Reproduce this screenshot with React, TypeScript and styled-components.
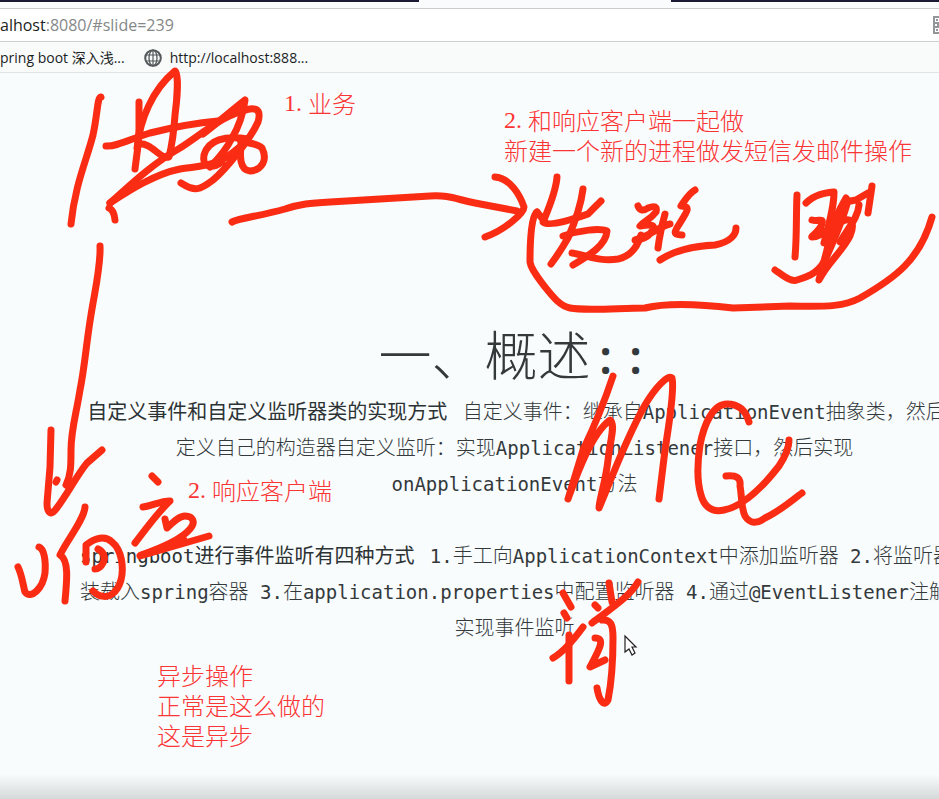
import React from "react";
import styled, { createGlobalStyle } from "styled-components";

const cjk = '"Noto Sans CJK SC", sans-serif';
const mono = '"DejaVu Sans Mono", "Noto Sans CJK SC", monospace';
const ui = '"Open Sans", "Noto Sans CJK SC", sans-serif';

const GlobalStyle = createGlobalStyle`
  *, *::before, *::after { box-sizing: border-box; }
  body { margin: 0; background: #f8fcfd; }
`;

const Page = styled.div`
  position: relative;
  display: flex;
  flex-direction: column;
  min-height: 100vh;
  overflow: hidden;
  font-family: ${ui};
`;

const TabStrip = styled.div`
  display: flex;
  height: 8px;
  background: #f9fbfc;
`;

const TabEdge = styled.div<{ $grow: number; $dark?: boolean }>`
  flex: ${(p) => p.$grow} 1 0;
  height: 2px;
  background: ${(p) => (p.$dark ? "#1a1b33" : "transparent")};
`;

const AddressBar = styled.div`
  display: flex;
  align-items: center;
  height: 34px;
  background: #fff;
  border-top: 1px solid #c9cccd;
  border-bottom: 1px solid #cdd0d0;
  font-size: 16px;
  color: #1c1f20;
`;

const AddressInput = styled.input`
  flex: 1;
  min-width: 0;
  padding: 0;
  border: 0;
  outline: 0;
  background: transparent;
  font: inherit;
  color: #858888;
`;

const IconButton = styled.button`
  display: flex;
  flex: none;
  width: 6px;
  padding: 0;
  border: 0;
  overflow: hidden;
  background: none;

  svg { flex: none; }
`;

const Bookmarks = styled.nav`
  display: flex;
  align-items: center;
  gap: 19px;
  height: 31px;
  padding-top: 2px;
  background: #f9fbfb;
  border-bottom: 1px solid #e1e4e4;
`;

const Bookmark = styled.a`
  display: flex;
  align-items: center;
  gap: 8px;
  font-size: 14px;
  line-height: 20px;
  color: #1b1e1f;
  text-decoration: none;
  white-space: nowrap;
`;

const Slide = styled.main`
  flex: 1;
  display: flex;
  flex-direction: column;
  align-items: center;
  gap: 36px;
  padding: 248px 0 110px 90px;
  font-family: ${cjk};
  color: #34393b;
`;

const Overview = styled.section`
  display: flex;
  flex-direction: column;
  align-items: center;
  gap: 8px;
`;

const Heading = styled.h1`
  display: flex;
  height: 64px;
  margin: 0;
  font-size: 53px;
  font-weight: 300;
  line-height: 64px;
  white-space: nowrap;
`;

const Colon = styled.span`
  width: 30px;
  font-family: "Noto Sans", sans-serif;
  font-size: 46px;
  font-weight: 600;
  line-height: 70px;
  text-align: center;
`;

const Paragraph = styled.p`
  display: flex;
  flex-direction: column;
  align-items: center;
  margin: 0;
  font-size: 20px;
  font-weight: 300;
  line-height: 36px;
`;

const Line = styled.span`
  display: block;
  height: 36px;
  white-space: pre;

  strong { padding: 0 4px; color: #2d3234; }
`;

const Code = styled.span`
  font-family: ${mono};
  font-size: 19px;
  line-height: 20px;
`;

const Note = styled.div<{ $x: number; $y: number }>`
  position: absolute;
  left: ${(p) => p.$x}px;
  top: ${(p) => p.$y}px;
  font-family: ${cjk};
  font-size: 24px;
  font-weight: 300;
  line-height: 30px;
  color: #fb3434;
`;

const NoteLine = styled.div`
  display: flex;
  height: 30px;
  white-space: nowrap;
`;

const NoteNumber = styled.span`
  width: 24px;
  font-family: "Liberation Serif", serif;
`;

const Ink = styled.svg`
  position: absolute;
  top: 0;
  left: 0;
  pointer-events: none;
`;

const BottomShade = styled.div`
  position: absolute;
  right: 0;
  bottom: 0;
  left: 0;
  height: 25px;
  background: linear-gradient(#f8fcfd, #d6d9da);
`;

const strokes = [
  "M101 97C97 98 98 112 93 135C86 162 75 185 71 224",
  "M139 102L139 130Q138 150 135 169",
  "M137 148C140 120 152 90 175 71C179 73 177 100 175 115C174 130 172 145 169 157C160 160 152 142 138 144",
  "M106 146C116 147 130 139 150 133C170 128 195 123 218 121",
  "M203 134C215 125 232 110 245 100C243 115 238 128 232 138C225 152 215 162 210 167",
  "M110 203C125 190 150 165 180 148C200 135 220 118 240 112C255 106 262 108 258 122C250 140 225 170 213 180C200 190 195 192 181 183",
  "M110 203C130 190 155 174 180 169C205 165 220 168 248 139C225 135 208 140 204 155C202 166 210 170 222 162",
  "M241 143C240 155 239 170 250 171C262 170 268 160 262 148C257 143 248 144 240 140",
  "M109 208Q114 210 115 220",
  "M232 222C240 218 260 216 285 209C300 204 310 203 330 202L430 196C450 195 455 199 475 203L517 211",
  "M495 177C510 178 520 195 524 207C524 213 505 230 485 237",
  "M537 212C532 214 530 235 530 262C531 270 540 280 545 287C553 297 560 306 570 308C585 311 620 308 645 308C665 303 700 304 733 308L790 306C830 307 845 306 860 298C895 278 920 260 932 217",
  "M557 177C556 192 548 210 543 222C550 228 585 215 588 214C592 210 598 204 601 201M537 212L545 222",
  "M583 189C581 205 575 222 568 238Q560 252 551 264",
  "M563 236C580 230 600 228 607 231C606 245 590 255 573 265",
  "M572 253C585 255 600 262 618 259C632 256 638 245 641 235",
  "M638 206Q641 213 648 208Q658 204 656 212C650 220 643 222 640 226C652 224 656 225 652 231C648 238 640 240 635 240C650 236 660 226 670 224",
  "M665 214Q660 232 658 248",
  "M695 190C688 194 684 202 681 206C690 206 688 210 683 218C676 230 670 235 682 235",
  "M660 260C675 250 695 246 715 245C730 242 736 235 736 228",
  "M797 195C796 215 797 235 795 257",
  "M806 203C815 194 825 193 834 192C834 207 829 225 824 243",
  "M775 270C785 277 791 282 797 280C811 276 820 271 826 258C834 240 842 222 847 204",
  "M812 220C818 222 824 217 822 224C819 232 810 237 812 237C822 237 828 228 838 222",
  "M833 222L827 250L819 280C828 262 842 252 850 236C855 224 852 217 843 221",
  "M846 198C838 212 832 225 826 240M845 202L856 200L868 193M859 205C858 218 848 228 840 242",
  "M872 186L868 213",
  "M100 246C101 265 95 290 91 315C86 345 85 365 80 390C76 415 71 430 71 450C71 465 71 475 66 485",
  "M51 430L50 467L47 503C47 513 51 516 56 509C67 495 77 475 87 463L102 450",
  "M57 480L56 482",
  "M18 567C22 575 23 585 25 592C31 600 43 588 45 573C46 560 44 549 39 547",
  "M85 507C84 520 67 540 60 555C69 560 67 580 65 601",
  "M86 562L86 545C95 538 105 535 112 542C122 550 124 568 121 580C117 594 108 598 102 596C98 596 95 593 93 591",
  "M98 549C104 552 106 558 103 563Q100 569 95 569",
  "M152 476L158 482",
  "M143 507C152 506 160 501 170 501C158 512 145 530 135 543",
  "M165 519L167 528C175 520 180 516 185 516C193 516 196 522 190 529C180 541 155 550 140 556L209 536",
  "M141 555L184 540",
  "M613 376C605 400 595 425 583 450L568 499C575 480 590 435 610 420C616 425 610 440 608 460C606 480 598 505 599 508C605 495 625 440 645 405C655 388 668 374 672 378C675 390 668 430 665 450L659 499",
  "M749 422C745 408 736 404 727 404C713 404 704 424 700 445C697 465 697 482 701 495C704 506 711 513 724 510C745 506 765 484 779 466C787 454 789 446 789 440",
  "M726 476C737 475 741 478 740 486C742 496 741 508 745 516C750 524 757 524 765 518C780 511 791 501 802 493",
  "M563 593L571 607",
  "M564 613L567 618",
  "M583 627C575 638 565 651 553 658",
  "M569 635L569 681",
  "M609 583L612 602",
  "M595 605L598 608",
  "M638 582C630 596 613 607 592 623",
  "M602 620C611 619 613 625 613 638C613 660 612 680 608 700C604 708 599 700 597 688",
  "M595 638C606 638 599 650 590 667L605 660",
];

const GlobeIcon = () => (
  <svg width="18" height="18" viewBox="0 0 18 18" fill="none" stroke="#54585a" aria-hidden="true">
    <circle cx="9" cy="9" r="7.8" strokeWidth="2" />
    <ellipse cx="9" cy="9" rx="4" ry="7.8" strokeWidth="1.3" />
    <path d="M9 1V17M2 6H16M2 12H16" strokeWidth="1.2" />
  </svg>
);

const QrIcon = () => (
  <svg width="18" height="18" viewBox="0 0 18 18" fill="none" stroke="#92969a" strokeWidth="2" aria-hidden="true">
    <path d="M1 1H7V7H1ZM1 11H7V17H1ZM11 1H17V7H11ZM11 11H17V17H11Z" />
    <path d="M3 4H5M3 14H5M0 9H2M4 9H8" />
  </svg>
);

export default function App() {
  return (
    <>
      <GlobalStyle />
      <Page>
        <TabStrip>
          <TabEdge $grow={419} $dark />
          <TabEdge $grow={252} />
          <TabEdge $grow={268} $dark />
        </TabStrip>
        <AddressBar>
          <span>alhost</span>
          <AddressInput aria-label="Address" defaultValue=":8080/#slide=239" />
          <IconButton aria-label="QR code">
            <QrIcon />
          </IconButton>
        </AddressBar>
        <Bookmarks>
          <Bookmark href="#spring">pring boot 深入浅...</Bookmark>
          <Bookmark href="#localhost">
            <GlobeIcon />
            http://localhost:888...
          </Bookmark>
        </Bookmarks>

        <Slide>
          <Overview>
            <Heading>
              一、概述
              <Colon>:</Colon>
              <Colon>:</Colon>
            </Heading>
            <Paragraph>
              <Line>
                <strong>自定义事件和自定义监听器类的实现方式</strong>
                <Code> </Code>自定义事件：继承自<Code>ApplicationEvent</Code>抽象类，然后
              </Line>
              <Line>
                定义自己的构造器自定义监听：实现<Code>ApplicationListener</Code>接口，然后实现
              </Line>
              <Line>
                <Code>onApplicationEvent</Code>方法
              </Line>
            </Paragraph>
          </Overview>
          <Paragraph>
            <Line>
              <strong>
                <Code>springboot</Code>进行事件监听有四种方式
              </strong>
              <Code> 1.</Code>手工向<Code>ApplicationContext</Code>中添加监听器<Code> 2.</Code>将监听器
            </Line>
            <Line>
              装载入<Code>spring</Code>容器<Code> 3.</Code>在<Code>application.properties</Code>
              中配置监听器<Code> 4.</Code>通过<Code>@EventListener</Code>注解
            </Line>
            <Line>实现事件监听</Line>
          </Paragraph>
        </Slide>

        <BottomShade />

        <Note $x={284} $y={88}>
          <NoteLine><NoteNumber>1.</NoteNumber>业务</NoteLine>
        </Note>
        <Note $x={504} $y={105}>
          <NoteLine><NoteNumber>2.</NoteNumber>和响应客户端一起做</NoteLine>
          <NoteLine>新建一个新的进程做发短信发邮件操作</NoteLine>
        </Note>
        <Note $x={188} $y={475}>
          <NoteLine><NoteNumber>2.</NoteNumber>响应客户端</NoteLine>
        </Note>
        <Note $x={157} $y={660}>
          <NoteLine>异步操作</NoteLine>
          <NoteLine>正常是这么做的</NoteLine>
          <NoteLine>这是异步</NoteLine>
        </Note>

        <Ink width="939" height="799" viewBox="0 0 939 799" fill="none" aria-hidden="true">
          <g stroke="#fa2d14" strokeWidth="7" strokeLinecap="round" strokeLinejoin="round">
            {strokes.map((d) => (
              <path key={d} d={d} />
            ))}
          </g>
          <path
            d="M625 636V652L629 649L632 655L635 653L632 647H636Z"
            fill="#fff"
            stroke="#222"
            strokeWidth="1.2"
          />
        </Ink>
      </Page>
    </>
  );
}
